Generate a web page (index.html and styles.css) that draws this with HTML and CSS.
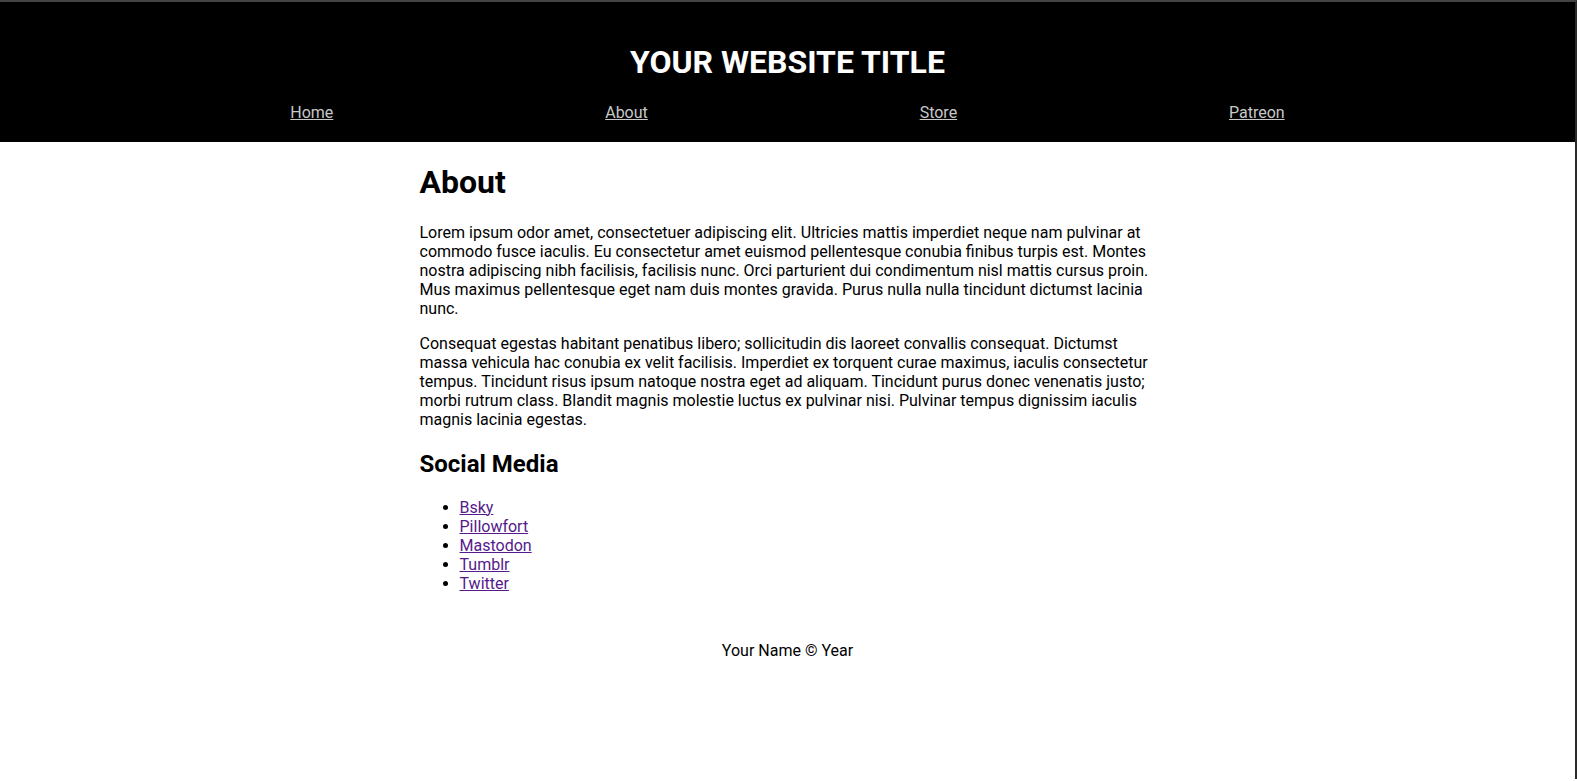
FILE: index.html
```html
<!DOCTYPE html>
<html lang="en">
<head>
<meta charset="utf-8">
<title>Your Website Title</title>
<link rel="stylesheet" href="styles.css">
</head>
<body>
<header class="site-header">
  <h1 class="site-title">YOUR WEBSITE TITLE</h1>
  <nav class="site-nav">
    <a href="#">Home</a>
    <a href="#">About</a>
    <a href="#">Store</a>
    <a href="#">Patreon</a>
  </nav>
</header>
<main class="content">
  <h1>About</h1>
  <p>Lorem ipsum odor amet, consectetuer adipiscing elit. Ultricies mattis imperdiet neque nam pulvinar at commodo fusce iaculis. Eu consectetur amet euismod pellentesque conubia finibus turpis est. Montes nostra adipiscing nibh facilisis, facilisis nunc. Orci parturient dui condimentum nisl mattis cursus proin. Mus maximus pellentesque eget nam duis montes gravida. Purus nulla nulla tincidunt dictumst lacinia nunc.</p>
  <p>Consequat egestas habitant penatibus libero; sollicitudin dis laoreet convallis consequat. Dictumst massa vehicula hac conubia ex velit facilisis. Imperdiet ex torquent curae maximus, iaculis consectetur tempus. Tincidunt risus ipsum natoque nostra eget ad aliquam. Tincidunt purus donec venenatis justo; morbi rutrum class. Blandit magnis molestie luctus ex pulvinar nisi. Pulvinar tempus dignissim iaculis magnis lacinia egestas.</p>
  <h2 class="section-title">Social Media</h2>
  <ul class="social">
    <li><a href="#">Bsky</a></li>
    <li><a href="#">Pillowfort</a></li>
    <li><a href="#">Mastodon</a></li>
    <li><a href="#">Tumblr</a></li>
    <li><a href="#">Twitter</a></li>
  </ul>
</main>
<footer class="site-footer">
  <p>Your Name © Year</p>
</footer>
</body>
</html>
```
FILE: styles.css
```css
html {
  background: #ffffff;
}
body {
  margin: 0;
  min-height: 779px;
  box-sizing: border-box;
  border-top: 2px solid #444444;
  border-right: 2px solid #2a2a2a;
  font-family: Roboto, "Liberation Sans", sans-serif;
  font-size: 16px;
  color: #000000;
}
.site-header {
  background: #000000;
  color: #ffffff;
  padding: 20px 0;
  text-align: center;
}
.site-title {
  font-size: 32px;
  margin: 21.44px 0;
}
.site-nav {
  display: flex;
  justify-content: space-around;
  width: 80.4%;
  margin: 0 auto;
}
.site-nav a {
  color: #c8c8c8;
}
.content {
  max-width: 736px;
  margin: 0 auto;
}
.content a {
  color: #551a8b;
}
.section-title {
  margin-top: 21px;
}
.site-footer {
  text-align: center;
  margin-top: 48px;
}
```
